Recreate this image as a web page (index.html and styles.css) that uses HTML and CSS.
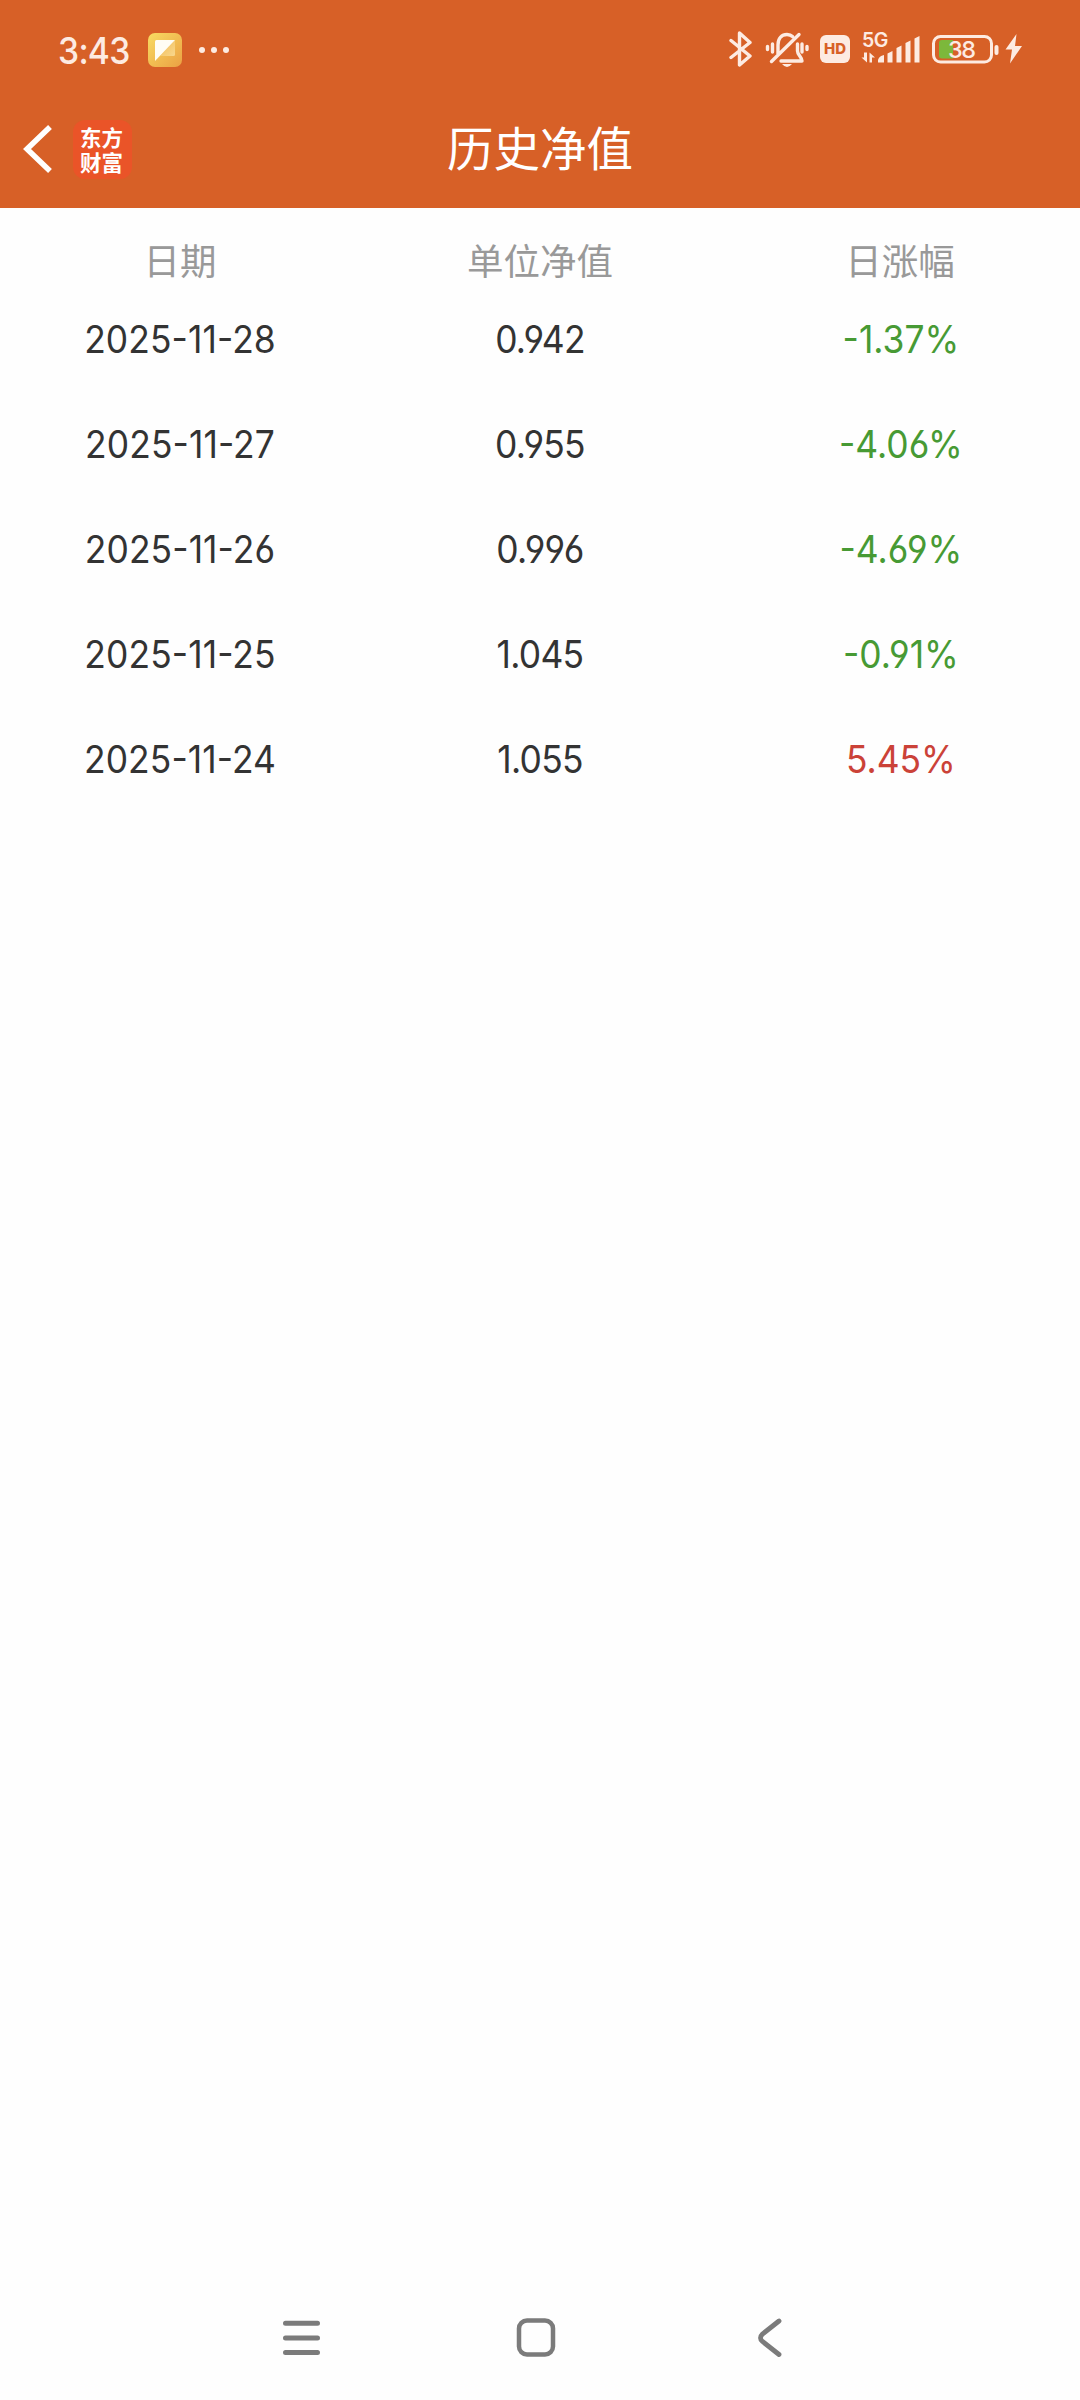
FILE: index.html
```html
<!DOCTYPE html>
<html lang="zh-CN">
<head>
<meta charset="utf-8">
<title>历史净值</title>
<link rel="stylesheet" href="styles.css">
</head>
<body>
<div class="screen">
  <header class="top">
    <div class="status">
      <div class="status-left">
        <span class="time">3:43</span>
        <svg class="app" width="34" height="34" viewBox="0 0 34 34">
          <defs>
            <linearGradient id="gold" x1="0" y1="0" x2="1" y2="1"><stop offset="0" stop-color="#f8dc62"/><stop offset="1" stop-color="#eba043"/></linearGradient>
            <linearGradient id="fold" x1="0" y1="0" x2="1" y2="1"><stop offset="0" stop-color="#f3bd55"/><stop offset="1" stop-color="#f8d78d"/></linearGradient>
          </defs>
          <rect width="34" height="34" rx="7" fill="url(#gold)"/>
          <path d="M27 7V21.500Q27 23 25.500 23H12Z" fill="url(#fold)"/>
          <path d="M7 8.500Q7 7 8.500 7H27L7 28Z" fill="#fffdf4"/>
        </svg>
        <svg class="dots" width="30" height="6" viewBox="0 0 30 6" fill="#fdebe2"><circle cx="3" cy="3" r="3"/><circle cx="15" cy="3" r="3"/><circle cx="27" cy="3" r="3"/></svg>
      </div>
      <div class="status-right">
        <svg width="24" height="38" viewBox="728 30 24 38" fill="none" stroke="#fdebe2" stroke-width="3.400" stroke-linejoin="round" stroke-linecap="round"><path d="M731 40.500L750 56L739.500 65V33L750 42.500L731 57.500"/></svg>
        <svg class="bell" width="44" height="38" viewBox="765 30 44 38" fill="none" stroke="#fdebe2" stroke-width="3.400" stroke-linecap="round" stroke-linejoin="round"><path d="M778 54V45C778 38 782 34.500 787 34.500C789 34.500 791 35 792.500 36.500M797.500 44V51C797.500 55 802 57 802 61H781M771.500 61.500L799 34.500M772.500 44V52M802 44V52M767.500 46.500V49.500M807 46.500V49.500"/><path d="M782 64H792Q787 70 782 64Z" fill="#fdebe2" stroke="none"/></svg>
        <span class="hd">HD</span>
        <div class="signal">
          <span class="net">5G</span>
          <svg width="60" height="34" viewBox="860 33 60 34" fill="#fdebe2"><path d="M864 53.500H867V63.500L861.500 58.500H864ZM869.500 63.500V53.500L875 58.500H872V63.500Z"/><path d="M878 61Q879 57 884 56V63.500H878ZM887.500 54.500L892.500 52V63.500H887.500ZM896.500 49L901.500 46.500V63.500H896.500ZM905.500 44L910.500 41.500V63.500H905.500ZM914.500 39.500L919.500 37V63.500H914.500Z"/></svg>
        </div>
        <div class="battery">
          <svg width="68" height="30" viewBox="931 34 68 30"><rect x="933.500" y="36.500" width="58" height="25.500" rx="7" fill="none" stroke="#fdebe2" stroke-width="3"/><rect x="994.500" y="45" width="4" height="10" rx="2" fill="#fdebe2"/><path d="M953 40H942Q939 40 939 43V55.500Q939 58.500 942 58.500H953Z" fill="#7cb83b"/></svg>
          <span class="level">38</span>
        </div>
        <svg class="bolt" width="17" height="30" viewBox="1005 35 17 30" fill="#fdebe2"><path d="M1016.500 35L1005.500 50.500H1012L1010 64.500L1022 47H1015Z"/></svg>
      </div>
    </div>
    <div class="bar">
      <div class="bar-side">
        <svg width="30" height="52" viewBox="22 123 30 52" fill="none" stroke="#fff" stroke-width="5.500"><path d="M50 127L27 149L50 171"/></svg>
        <span class="logo"><span>东方</span><span>财富</span></span>
      </div>
      <h1 class="title">历史净值</h1>
    </div>
  </header>
  <main class="table">
    <div class="row head"><span>日期</span><span>单位净值</span><span>日涨幅</span></div>
    <div class="row"><span class="date">2025-11-28</span><span class="value">0.942</span><span class="rate down">-1.37%</span></div>
    <div class="row"><span class="date">2025-11-27</span><span class="value">0.955</span><span class="rate down">-4.06%</span></div>
    <div class="row"><span class="date">2025-11-26</span><span class="value">0.996</span><span class="rate down">-4.69%</span></div>
    <div class="row"><span class="date">2025-11-25</span><span class="value">1.045</span><span class="rate down">-0.91%</span></div>
    <div class="row"><span class="date">2025-11-24</span><span class="value">1.055</span><span class="rate up">5.45%</span></div>
  </main>
  <nav class="nav">
    <svg width="40" height="44" viewBox="0 0 40 44" fill="none" stroke="#7b7b7b" stroke-width="5" stroke-linecap="round"><path d="M4.500 7.300H36.500M4.500 22H36.500M4.500 36.600H36.500"/></svg>
    <svg width="40" height="44" viewBox="0 0 40 44" fill="none" stroke="#7b7b7b" stroke-width="4.500"><rect x="3" y="4.500" width="34" height="34" rx="8"/></svg>
    <svg width="40" height="44" viewBox="0 0 40 44" fill="none" stroke="#7b7b7b" stroke-width="4.800" stroke-linecap="round"><path d="M28 5L11.500 18Q7.500 22 11.500 25.500L28 38.500"/></svg>
  </nav>
</div>
</body>
</html>
```
FILE: styles.css
```css
* { box-sizing: border-box; }
body { margin: 0; background: #fefefe; font-family: Inter, "Noto Sans CJK SC", sans-serif; }
svg { display: block; flex: none; }
.screen { display: flex; flex-direction: column; width: 1080px; height: 2400px; }
.top { height: 208px; background: #d76027; color: #fff; }
.status { display: flex; justify-content: space-between; height: 90px; padding: 0 58px; color: #fdebe2; }
.status-left { display: flex; align-items: center; height: 100px; }
.time { width: 90px; font-size: 37px; font-weight: 500; letter-spacing: -0.8px; transform: scaleX(0.91); transform-origin: left; }
.dots { margin-left: 17px; }
.status-right { display: flex; align-items: center; height: 98px; }
.bell { margin-left: 13px; }
.hd { width: 30px; height: 28px; margin-left: 11px; border-radius: 6px; background: #fdebe2; color: #d76027; font-size: 15px; font-weight: 800; line-height: 28px; text-align: center; }
.signal { position: relative; margin-left: 10px; }
.net { position: absolute; left: 2px; top: -1px; font-size: 19.500px; font-weight: 600; line-height: 19px; letter-spacing: -0.5px; }
.battery { position: relative; margin-left: 11px; }
.level { position: absolute; left: 17px; top: 3px; font-size: 23.500px; font-weight: 500; line-height: 25px; letter-spacing: -1.5px; }
.bolt { margin-left: 6px; }
.bar { display: grid; grid-template-columns: 1fr auto 1fr; align-items: center; height: 118px; }
.bar-side { display: flex; align-items: center; gap: 21px; padding-left: 22px; }
.logo { display: flex; flex-direction: column; width: 59px; height: 59px; padding: 4px 2px 0 0; border-radius: 12px; background: #ea5428; font: 700 21.500px/25.500px "Noto Sans CJK SC", sans-serif; text-align: center; }
.title { margin: -6px 0 0; font: 400 46.500px/60px "Noto Sans CJK SC", sans-serif; }
.table { flex: 1; }
.row { display: grid; grid-template-columns: repeat(3, 1fr); align-items: center; height: 105px; color: #333; font-size: 38.500px; text-align: center; font-feature-settings: "case", "cv03", "cv04"; }
.head { height: 78px; padding-top: 26px; color: #999; font: 400 36.500px/52px "Noto Sans CJK SC", sans-serif; }
.date, .value, .rate { transform: scaleX(0.92); }
.date { letter-spacing: 0.1px; }
.value { letter-spacing: -0.8px; }
.rate { padding-left: 2px; letter-spacing: 0; }
.down { color: #479a34; }
.up { color: #cb4238; }
.nav { display: flex; align-items: center; gap: 195px; height: 124px; padding-left: 281px; }
```
